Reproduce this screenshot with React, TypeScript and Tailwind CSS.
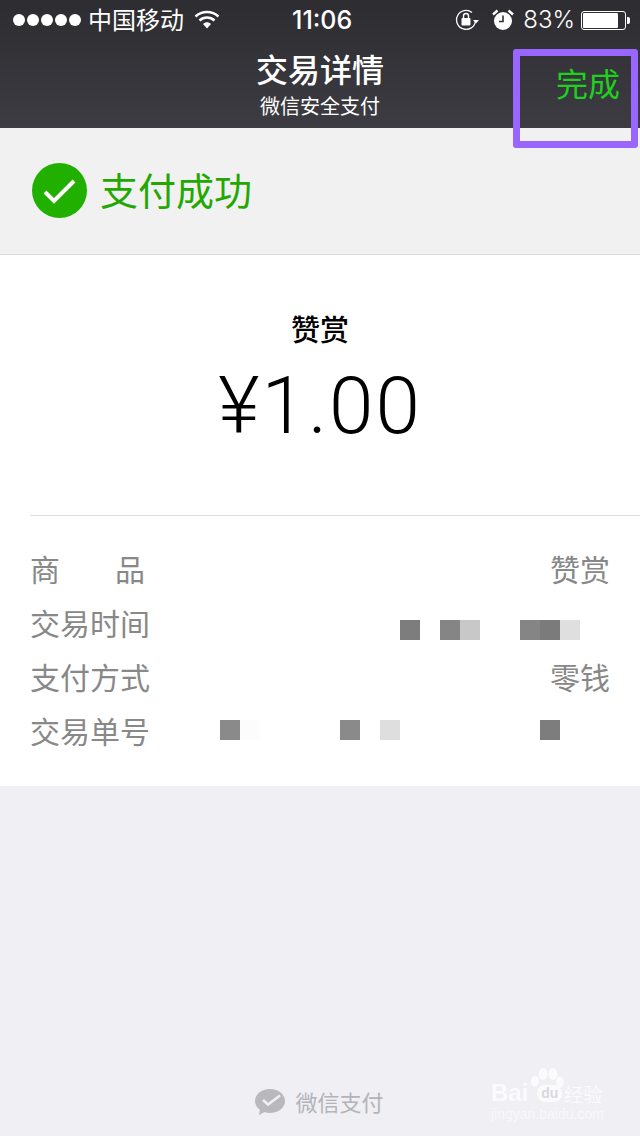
import React from 'react';

const CJK = "font-['Noto_Sans_CJK_SC','Noto_Sans',sans-serif]";

// pixelated blocks that hide the time and order number, null = empty cell
const timeCells = ['bg-[#7d7d7d]', null, 'bg-[#858585]', 'bg-[#c8c8c8]', null, null, 'bg-[#858585]', 'bg-[#7b7b7b]', 'bg-[#dfdfdf]'];
const orderCells = [
  'bg-[#8a8a8a]', 'bg-[#fcfcfc]', null, null, null, null, 'bg-[#8a8a8a]', null, 'bg-[#dedede]',
  null, null, null, null, null, null, null, 'bg-[#7d7d7d]',
];

const Mosaic = ({ cells }: { cells: (string | null)[] }) => (
  <div className="flex">
    {cells.map((c, i) => (
      <div key={i} className={`w-5 h-5 ${c ?? ''}`} />
    ))}
  </div>
);

const StatusBar = () => (
  <div className="h-10 flex items-center justify-between pl-[13px] pr-[10px] text-white relative">
    <div className="flex items-center">
      <div className="flex gap-[2px]">
        {[0, 1, 2, 3, 4].map((i) => (
          <div key={i} className="w-[12px] h-[12px] rounded-full bg-white" />
        ))}
      </div>
      <span className={`ml-[7px] mt-[-3px] text-[24px] leading-none ${CJK}`}>中国移动</span>
      <svg className="ml-[10px] mt-[-2px]" width="26" height="20" viewBox="0 0 26 20">
        <path d="M1.5 7.5C8 1.5 18 1.5 24.5 7.5" fill="none" stroke="white" strokeWidth="2.6" />
        <path d="M5.5 11.5C10 7.5 16 7.5 20.5 11.5" fill="none" stroke="white" strokeWidth="2.6" />
        <path d="M9 15C11.5 12.8 14.5 12.8 17 15L13 19.5Z" fill="white" />
      </svg>
    </div>
    <span className="absolute left-[292px] top-[5px] text-[25px] leading-[30px] font-medium font-['Inter',sans-serif]">11:06</span>
    <div className="flex items-center">
      <svg width="24" height="24" viewBox="0 0 24 24">
        <path d="M20.5 13A9.5 9.5 0 1 1 17 4.5" fill="none" stroke="white" strokeWidth="1.3" />
        <path d="M18 12h6l-3 3.5z" fill="white" />
        <rect x="6.5" y="10" width="9" height="7.5" rx="1" fill="white" />
        <path d="M8.5 10V8a2.5 2.5 0 0 1 5 0v2" fill="none" stroke="white" strokeWidth="1.4" />
      </svg>
      <svg className="ml-[13px]" width="22" height="24" viewBox="0 0 22 24">
        <circle cx="11" cy="13" r="9" fill="white" />
        <path d="M11 7.5V13.500H7" fill="none" stroke="#2f2f34" strokeWidth="1.6" />
        <path d="M1 6.5L5.5 2.5M21 6.5L16.5 2.5" stroke="white" strokeWidth="2.4" />
      </svg>
      <span className="ml-[9px] text-[24px] leading-none font-['Inter',sans-serif] font-light">83%</span>
      <div className="ml-[6px] w-[45px] h-[19px] rounded-[3px] border border-white p-[1px]">
        <div className="h-full w-[35px] bg-white rounded-[1px]" />
      </div>
      <div className="ml-[1px] w-[3px] h-[7px] bg-white rounded-r-[2px]" />
    </div>
  </div>
);

const NavBar = () => (
  <div className="h-[88px] relative">
    <div className="flex flex-col items-center text-white pt-[8px]">
      <span className={`text-[32px] leading-[40px] font-medium ${CJK}`}>交易详情</span>
      <span className={`text-[20px] leading-[26px] mt-[5px] ${CJK}`}>微信安全支付</span>
    </div>
    <span className={`absolute right-[20px] top-[22px] text-[32px] leading-[40px] text-[#1fd01f] ${CJK}`}>完成</span>
  </div>
);

const Row = ({ label, children }: { label: React.ReactNode; children: React.ReactNode }) => (
  <div className={`h-[54px] flex items-center justify-between text-[30px] text-[#888888] ${CJK}`}>
    <span>{label}</span>
    {children}
  </div>
);

export default function App() {
  return (
    <div className="relative w-[640px] h-[1136px] overflow-hidden bg-[#efeff4] flex flex-col">
      <div className="bg-gradient-to-b from-[#2c2c31] to-[#3d3c42]">
        <StatusBar />
        <NavBar />
      </div>

      {/* payment result */}
      <div className="h-[127px] bg-[#f1f1f1] border-b border-[#dcdcdc] flex items-start pt-[35px] pl-[32px]">
        <svg width="55" height="55" viewBox="0 0 55 55">
          <circle cx="27.5" cy="27.5" r="27.5" fill="#22b000" />
          <path d="M13 29L22 38L42 18" fill="none" stroke="white" strokeWidth="4" />
        </svg>
        <span className={`ml-[13px] mt-[-2px] text-[38px] leading-[55px] text-[#22a800] ${CJK}`}>支付成功</span>
      </div>

      <div className="bg-white h-[531px] flex flex-col">
        <div className={`pt-[53px] text-center text-[29px] leading-[40px] font-medium text-black ${CJK}`}>赞赏</div>
        <div className="mt-[13px] text-center text-[80px] leading-[90px] tracking-[2px] text-black font-['Roboto',sans-serif] font-light">¥1.00</div>

        <div className="mt-[64px] ml-[30px] border-t border-[#dedede] pr-[30px] pt-[25px]">
          <Row label={<span className="flex w-[115px] justify-between"><span>商</span><span>品</span></span>}>
            <span>赞赏</span>
          </Row>
          <Row label="交易时间">
            <div className="mr-[30px] mt-[16px]"><Mosaic cells={timeCells} /></div>
          </Row>
          <Row label="支付方式">
            <span>零钱</span>
          </Row>
          <Row label="交易单号">
            <div className="mr-[50px]"><Mosaic cells={orderCells} /></div>
          </Row>
        </div>
      </div>

      {/* footer brand */}
      <div className="mt-auto mb-[18px] flex items-center justify-center text-[#b4b4b8] pr-[2px]">
        <svg width="32" height="28" viewBox="0 0 32 28">
          <path d="M16 1C7.5 1 1 6.5 1 13c0 3.5 2 6.8 5 9l-1 5 5.5-3c1.8.6 3.6 1 5.500 1 8.500 0 15-5.500 15-12S24.500 1 16 1z" fill="#b9b9bd" />
          <path d="M9 12l5 4.500L26 7.500" fill="none" stroke="#efeff4" strokeWidth="2.6" />
        </svg>
        <span className={`ml-[9px] text-[22px] ${CJK}`}>微信支付</span>
      </div>

      {/* purple highlight drawn over the done button */}
      <div className="absolute left-[513px] top-[49px] w-[125px] h-[99px] border-[7px] border-[#9966ff] rounded-[3px]" />

      {/* watermark */}
      <div className="absolute left-[491px] top-[1066px] w-[120px] text-white/75">
        <svg className="absolute left-[39px] top-0" width="36" height="24" viewBox="0 0 36 24">
          <ellipse cx="5" cy="15" rx="4" ry="5.500" fill="white" fillOpacity="0.75" />
          <ellipse cx="13" cy="8" rx="4.500" ry="6" fill="white" fillOpacity="0.75" />
          <ellipse cx="23" cy="8" rx="4.500" ry="6" fill="white" fillOpacity="0.75" />
          <ellipse cx="30" cy="16" rx="4" ry="5.500" fill="white" fillOpacity="0.75" />
        </svg>
        <div className="flex items-center mt-[17px] h-[20px]">
          <span className="text-[24px] leading-none font-bold font-['Liberation_Sans',sans-serif]">Bai</span>
          <span className="ml-[9px] w-[25px] h-[17px] rounded-[8px] bg-white/75 text-[#d8d8de] text-[14px] leading-[17px] text-center font-bold font-['Liberation_Sans',sans-serif]">du</span>
          <span className={`ml-[2px] text-[19px] leading-none whitespace-nowrap ${CJK}`}>经验</span>
        </div>
        <div className="mt-[3px] text-[14px] leading-[16px] whitespace-nowrap font-['Liberation_Sans',sans-serif] text-white/60">jingyan.baidu.com</div>
      </div>
    </div>
  );
}
